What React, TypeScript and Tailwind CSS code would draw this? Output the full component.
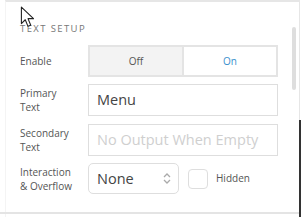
import React from 'react';

const font = { fontFamily: '"Open Sans", "Liberation Sans", sans-serif' };

const Label: React.FC<{ lines: string[] }> = ({ lines }) => (
  <div className="w-[68px] shrink-0 text-[10px] leading-[14px] text-[#555]">
    {lines.map((l) => (
      <div key={l}>{l}</div>
    ))}
  </div>
);

const App: React.FC = () => {
  return (
    <div className="relative w-[301px] h-[217px] bg-white overflow-hidden" style={font}>
      {/* panel frame */}
      <div className="absolute inset-0 border-t-2 border-r border-[#e6e6e6] border-l border-l-[#f4f4f4] ml-[5px] mr-[1px]" />
      <div className="absolute right-0 top-[120px] bottom-0 w-[2px] bg-[#333]" />
      <div className="absolute left-0 right-[2px] top-[212px] h-[2px] bg-[#e4e4e4]" />
      {/* scrollbar */}
      <div className="absolute left-[292px] top-[27px] w-[4px] h-[63px] rounded bg-[#dedede]" />

      <div className="relative pl-[20px] pt-[23px] w-[258px] box-content">
        <div className="text-[9.5px] leading-[11px] tracking-[1.4px] text-[#777]">TEXT SETUP</div>

        <div className="flex items-center mt-[11px] h-[32px]">
          <Label lines={['Enable']} />
          <div className="flex flex-1 h-[32px] border-2 border-[#e4e4e4] text-[10px]">
            <div className="flex-1 flex items-center justify-center bg-[#f3f3f3] border-r-2 border-[#e4e4e4] text-[#555]">Off</div>
            <div className="flex-1 flex items-center justify-center bg-white text-[#3a8fcc]">On</div>
          </div>
        </div>

        <div className="flex items-center mt-[7px] h-[32px]">
          <Label lines={['Primary', 'Text']} />
          <div className="flex-1 h-[32px] border border-[#dedede] flex items-center px-[8px] text-[14.5px] text-[#444]">Menu</div>
        </div>

        <div className="flex items-center mt-[8px] h-[32px]">
          <Label lines={['Secondary', 'Text']} />
          <div className="flex-1 h-[32px] border border-[#dedede] flex items-center px-[8px] text-[14.5px] text-[#cfcfcf] whitespace-nowrap overflow-hidden">No Output When Empty</div>
        </div>

        <div className="flex items-center mt-[7px] h-[31px]">
          <Label lines={['Interaction', '& Overflow']} />
          <div className="w-[91px] h-[31px] border border-[#dedede] rounded-[5px] flex items-center justify-between pl-[8px] pr-[7px] text-[14.5px] text-[#444]">
            <span>None</span>
            <svg width="8" height="13" viewBox="0 0 8 13" fill="none" stroke="#aaa" strokeWidth="1.3">
              <path d="M1 5 L4 2 L7 5" />
              <path d="M1 8 L4 11 L7 8" />
            </svg>
          </div>
          <div className="ml-[9px] w-[20px] h-[20px] border border-[#dedede] rounded-[4px]" />
          <span className="ml-[8px] text-[10px] text-[#555]">Hidden</span>
        </div>
      </div>

      {/* mouse cursor */}
      <svg className="absolute left-[20px] top-[6px]" width="16" height="22" viewBox="0 0 14 20">
        <path d="M1 1 L1 16 L4.5 12.5 L7 18.5 L9.5 17.5 L7 11.5 L12 11.5 Z" fill="white" stroke="#222" strokeWidth="1" strokeLinejoin="round" />
      </svg>
    </div>
  );
};

export default App;
